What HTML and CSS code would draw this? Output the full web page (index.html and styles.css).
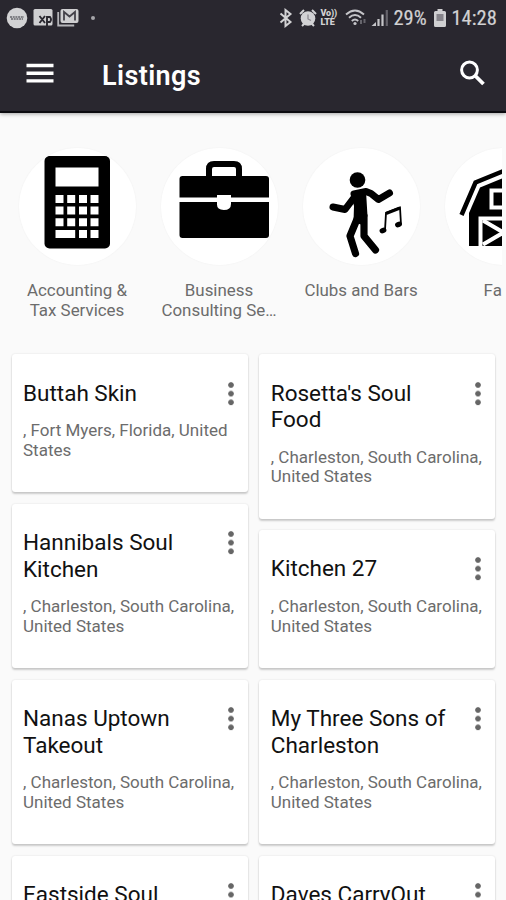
FILE: index.html
```html
<!DOCTYPE html>
<html lang="en">
<head>
<meta charset="utf-8">
<title>Listings</title>
<link rel="stylesheet" href="styles.css">
</head>
<body>
<header class="top">
  <div class="status">
    <div class="notifications">
      <svg width="22" height="22" viewBox="0 0 22 22"><circle cx="11" cy="11" r="10.3" fill="#d2d2d4"/><path d="M4 10h14M5 12h12" stroke="#66666b" stroke-width="1.4" stroke-dasharray="2 .7"/></svg>
      <svg class="xp" width="20" height="20" viewBox="0 0 20 20"><rect x=".5" y="1" width="19" height="16.500" rx="1.500" fill="#cfcfd1"/><path d="M6.500 8l5.500 7M12 8l-5.500 7M14 8v10M14 9h3q2 2.500 0 5h-3" fill="none" stroke="#29272f" stroke-width="1.900"/></svg>
      <svg class="mail" width="22" height="20" viewBox="0 0 22 20"><path d="M1.200 4v13.500h16" fill="none" stroke="#b5b5b9" stroke-width="1.800"/><rect x="3.500" y="1" width="18" height="14" rx="2" fill="#cfcfd1"/><path d="M7 12.500V4l5.500 4.500L18 4v8.500" fill="none" stroke="#44424a" stroke-width="1.800"/></svg>
      <i class="more-dot"></i>
    </div>
    <div class="system">
      <svg width="14" height="20" viewBox="0 0 14 20"><path d="M1.500 5.500l10 8.500-5 4V2l5 4-10 8.500" fill="none" stroke="#d2d2d4" stroke-width="2"/></svg>
      <svg class="alarm" width="18" height="18" viewBox="0 0 18 18"><circle cx="9" cy="9.500" r="7.300" fill="#d2d2d4"/><path d="M1 5l4-4M17 5l-4-4M3 17l3-3M15 17l-3-3" stroke="#d2d2d4" stroke-width="2"/><path d="M9 5.500v4.500l3 1.500" fill="none" stroke="#88868d" stroke-width="1.200"/></svg>
      <span class="volte"><span>Vo))</span><span>LTE</span></span>
      <svg class="wifi" width="22" height="18" viewBox="0 0 22 18"><g fill="none" stroke="#c5c5c9" stroke-width="1.900"><path d="M1 5.500q9-8 18 0M4 8.800q6-5.500 12 0M6.800 12q3.200-3 6.400 0"/></g><circle cx="10" cy="14.500" r="1.600" fill="#c5c5c9"/><path d="M16 11v4M19.500 10v4" stroke="#66656c" stroke-width="2"/></svg>
      <svg class="signal" width="18" height="18" viewBox="0 0 18 18"><path d="M.5 17l4.500-4v4z" fill="#c5c5c9"/><path d="M7.500 10v7M11.500 5.500V17" stroke="#c5c5c9" stroke-width="2.200"/><path d="M15.800 1v16" stroke="#65636b" stroke-width="2.200"/></svg>
      <span class="percent">29%</span>
      <svg class="battery" width="12" height="18" viewBox="0 0 12 18"><path d="M3.500 0h5v2H10.500q1.500 0 1.500 1.500v13q0 1.500-1.500 1.500h-9Q0 18 0 16.500v-13Q0 2 1.500 2h2z" fill="#cfcfd1"/><path d="M2.500 5h7v7h-7z" fill="#85838a"/></svg>
      <span class="clock">14:28</span>
    </div>
  </div>
  <div class="appbar">
    <svg class="menu" width="28" height="22" viewBox="0 0 28 22"><path d="M.5 3.500h27M.5 11.200h27M.5 18.900h27" stroke="#fff" stroke-width="3.400"/></svg>
    <h1>Listings</h1>
    <svg class="search" width="28" height="28" viewBox="0 0 28 28"><circle cx="10.500" cy="11" r="7.900" fill="none" stroke="#fff" stroke-width="3"/><path d="M16 16.500l8.500 8.500" stroke="#fff" stroke-width="3.800"/></svg>
  </div>
</header>
<nav class="categories">
  <div class="category">
    <div class="disc"><svg width="117" height="117" viewBox="0 0 117 117">
      <rect x="25.500" y="8" width="65.500" height="92.500" rx="5"/>
      <g fill="#fff"><path d="M36.500 19.500h43v19h-43z"/>
      <path d="M36.500 47h8v8h-8zM48.200 47h8v8h-8zM60 47h8v8h-8zM71.500 47h8v8h-8zM36.500 58.500h8v8h-8zM48.200 58.500h8v8h-8zM60 58.500h8v8h-8zM71.500 58.500h8v8h-8zM36.500 70.300h8v8h-8zM48.200 70.300h8v8h-8zM60 70.300h8v8h-8zM71.500 70.300h8v8h-8zM36.500 82h19.700v8H36.500zM60 82h8v8h-8zM71.500 82h8v8h-8z"/></g></svg></div>
    <p>Accounting &amp;<br>Tax Services</p>
  </div>
  <div class="category">
    <div class="disc"><svg width="117" height="117" viewBox="0 0 117 117">
      <path d="M48 29v-8q0-5 5-5h20q5 0 5 5v8" fill="none" stroke="#000" stroke-width="6"/>
      <rect x="18.500" y="28" width="89.500" height="62" rx="3"/>
      <path d="M18 49.500h91v4.500H70v2q0 6-7.200 6T56 56v-2H18zM56 47h14v5H56z" fill="#fff"/></svg></div>
    <p>Business<br>Consulting Se…</p>
  </div>
  <div class="category">
    <div class="disc"><svg width="117" height="117" viewBox="0 0 117 117">
      <circle cx="54.500" cy="32" r="7.800"/>
      <path d="M51 46l12-2.500 5 2 7.500 6 11-6.500" fill="none" stroke="#000" stroke-width="7" stroke-linecap="round" stroke-linejoin="round"/>
      <path d="M53 47l-11 14.500L30 59" fill="none" stroke="#000" stroke-width="7" stroke-linecap="round" stroke-linejoin="round"/>
      <path d="M48 46l15-3 1.500 25-5 9-9-3 .5-16z"/>
      <path d="M54.500 70L47 88l5.500 17.500M61 68v20l11.500 14" fill="none" stroke="#000" stroke-width="7.200" stroke-linecap="round" stroke-linejoin="round"/>
      <path d="M82 82l1-17 14-5.500 1 17" fill="none" stroke="#000" stroke-width="1.800"/><path d="M83 65.500l14-5.500" stroke="#000" stroke-width="3"/>
      <ellipse cx="80" cy="82.500" rx="3.500" ry="2.700" transform="rotate(-20 80 82.500)"/><ellipse cx="95.500" cy="76.500" rx="3.500" ry="2.700" transform="rotate(-20 95.500 76.500)"/></svg></div>
    <p>Clubs and Bars</p>
  </div>
  <div class="category">
    <div class="disc"><svg width="117" height="117" viewBox="0 0 117 117">
      <path d="M16.500 67L30.500 34.500l28-11.500L86.500 34.500 100.500 67" fill="none" stroke="#000" stroke-width="4.500"/>
      <path d="M24 98V65L35 39.500l23.500-9.500L82 39.500 93 65v33z"/>
      <path d="M35.500 98V70.500h46V98" fill="none" stroke="#fff" stroke-width="4"/>
      <path d="M38 72.500l41 24M38 96.500l41-24" stroke="#fff" stroke-width="4"/>
      <path d="M46.500 42.500h24v17h-24z" fill="none" stroke="#fff" stroke-width="4"/></svg></div>
    <p>Farm</p>
  </div>
</nav>
<main class="listings">
  <div class="column">
    <article class="card"><div class="head"><h2>Buttah Skin</h2><i class="dots"></i></div><p>, Fort Myers, Florida, United<br>States</p></article>
    <article class="card"><div class="head"><h2>Hannibals Soul<br>Kitchen</h2><i class="dots"></i></div><p>, Charleston, South Carolina,<br>United States</p></article>
    <article class="card"><div class="head"><h2>Nanas Uptown<br>Takeout</h2><i class="dots"></i></div><p>, Charleston, South Carolina,<br>United States</p></article>
    <article class="card"><div class="head"><h2>Eastside Soul</h2><i class="dots"></i></div></article>
  </div>
  <div class="column">
    <article class="card"><div class="head"><h2>Rosetta's Soul<br>Food</h2><i class="dots"></i></div><p>, Charleston, South Carolina,<br>United States</p></article>
    <article class="card"><div class="head"><h2>Kitchen 27</h2><i class="dots"></i></div><p>, Charleston, South Carolina,<br>United States</p></article>
    <article class="card"><div class="head"><h2>My Three Sons of<br>Charleston</h2><i class="dots"></i></div><p>, Charleston, South Carolina,<br>United States</p></article>
    <article class="card"><div class="head"><h2>Daves CarryOut</h2><i class="dots"></i></div></article>
  </div>
</main>
</body>
</html>
```
FILE: styles.css
```css
* { box-sizing: border-box; margin: 0; }
html, body { height: 900px; overflow: hidden; }
body {
  background: #fafafa;
  font-family: Roboto, "Liberation Sans", sans-serif;
  color: #111;
  display: flex;
  flex-direction: column;
}
svg { display: block; flex: none; }
.top {
  height: 113px;
  flex: none;
  background: #29272f;
  border-bottom: 2px solid #0c0b10;
  box-shadow: 0 1px 4px rgba(0, 0, 0, .35);
}
.status {
  height: 35px;
  padding: 0 8.500px 0 6px;
  display: flex;
  justify-content: space-between;
  align-items: center;
  color: #d2d2d4;
}
.notifications, .system { display: flex; align-items: center; }
.xp { margin-left: 5px; }
.mail { margin-left: 4px; }
.more-dot { width: 4px; height: 4px; border-radius: 50%; background: #a5a5a9; margin-left: 12px; }
.alarm { margin-left: 6px; }
.volte { margin-left: 4px; width: 18px; display: grid; grid-template-rows: 9px 9px; font-size: 9px; line-height: 9px; font-weight: 900; white-space: nowrap; letter-spacing: -.2px; }
.wifi { margin-left: 6px; }
.signal { margin-left: 4px; }
.percent, .clock { font-family: "Roboto Condensed", Roboto, sans-serif; font-size: 20.500px; line-height: 24px; white-space: nowrap; -webkit-text-stroke: .2px #d2d2d4; }
.percent { margin-left: 5px; width: 34px; letter-spacing: 0; }
.battery { margin-left: 6px; }
.clock { margin-left: 6px; width: 46px; }
.appbar { height: 76px; padding: 0 20px 0 26px; display: flex; align-items: center; }
h1 { margin-left: 48px; font-size: 27px; font-weight: 600; letter-spacing: .4px; line-height: 32px; color: #fff; padding-top: 5px; }
.search { margin-left: auto; margin-right: -1px; }
.categories {
  height: 241px;
  flex: none;
  margin-right: 4px;
  padding: 35px 0 0 18.500px;
  display: flex;
  gap: 25px;
  overflow: hidden;
}
.category { width: 117px; flex: none; text-align: center; }
.disc { width: 117px; height: 117px; border-radius: 50%; background: #fff; box-shadow: 0 0 2px rgba(0, 0, 0, .05); overflow: hidden; }
.category p { margin-top: 15px; font-size: 16.900px; line-height: 20px; color: #6c6c6c; white-space: nowrap; }
.listings { display: grid; grid-template-columns: 236px 236px; gap: 11.800px; padding-left: 11.500px; }
.column { display: flex; flex-direction: column; gap: 11.100px; }
.card {
  background: #fff;
  border-radius: 3px;
  padding: 25.500px 11.500px 31.700px;
  box-shadow: 0 2px 2px rgba(0, 0, 0, .18), 0 0 2px rgba(0, 0, 0, .12);
}
.head { display: flex; justify-content: space-between; }
h2 { font-size: 22.500px; font-weight: 400; line-height: 26.700px; color: #111; white-space: nowrap; }
.dots {
  width: 6px;
  height: 26px;
  margin: 1px 2.500px 0 0;
  background: radial-gradient(circle at 3px 4px, #666 2.400px, transparent 3.200px) 0 0 / 6px 8.700px;
}
.card p { margin-top: 14.700px; font-size: 17px; line-height: 19.800px; color: #6c6c6c; white-space: nowrap; }
```
